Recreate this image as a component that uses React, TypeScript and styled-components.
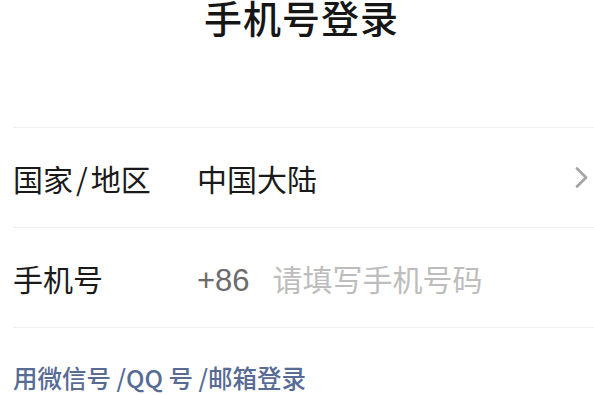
import React from "react";
import styled, { createGlobalStyle } from "styled-components";

const Global = createGlobalStyle`
  html, body { margin: 0; padding: 0; background: #ffffff; }
  body { font-family: "Noto Sans CJK SC", "Noto Sans", sans-serif; -webkit-font-smoothing: antialiased; }
`;

const Page = styled.div`
  width: 594px;
  height: 395px;
  overflow: hidden;
  background: #ffffff;
  display: flex;
  flex-direction: column;
`;

const Title = styled.h1`
  flex-shrink: 0;
  margin: 0;
  padding: 0 0 0 9px;
  height: 127px;
  font-size: 38px;
  line-height: 34px;
  font-weight: 500;
  color: #161616;
  text-align: center;
  letter-spacing: 1px;
`;

const Form = styled.div`
  flex-shrink: 0;
  display: flex;
  flex-direction: column;
  margin-left: 13px;
  border-top: 1px solid #f0f0f0;
`;

const Row = styled.div`
  display: flex;
  align-items: center;
  height: 99px;
  border-bottom: 1px solid #f0f0f0;
`;

const Label = styled.div`
  width: 184px;
  flex-shrink: 0;
  font-size: 30px;
  color: #1a1a1a;
`;

const Slash = styled.span`
  margin: 0 3px;
`;

const Value = styled.div`
  flex: 1;
  font-size: 30px;
  color: #1a1a1a;
`;

const Prefix = styled.span`
  font-family: "Liberation Sans", Arial, sans-serif;
  font-size: 31px;
  color: #6b6b6b;
  margin-right: 23px;
`;

const Placeholder = styled.span`
  font-size: 30px;
  color: #bdbdbd;
`;

const Chevron = styled.svg`
  width: 16px;
  height: 24px;
  margin-right: 4px;
  flex-shrink: 0;
`;

const Link = styled.a`
  flex-shrink: 0;
  display: block;
  margin: 32px 0 0 13px;
  font-size: 24.5px;
  font-weight: 500;
  color: #576b95;
  text-decoration: none;
  white-space: nowrap;
`;

export default function App() {
  return (
    <>
      <Global />
      <Page>
        <Title>手机号登录</Title>
        <Form>
          <Row>
            <Label>
              国家<Slash>/</Slash>地区
            </Label>
            <Value>中国大陆</Value>
            <Chevron viewBox="0 0 16 24">
              <polyline points="3,2.5 12,11.5 3,20.5" fill="none" stroke="#a5a5a5" strokeWidth="2.8" strokeLinecap="round" strokeLinejoin="round" />
            </Chevron>
          </Row>
          <Row>
            <Label>手机号</Label>
            <Value>
              <Prefix>+86</Prefix>
              <Placeholder>请填写手机号码</Placeholder>
            </Value>
          </Row>
        </Form>
        <Link>用微信号 /QQ 号 /邮箱登录</Link>
      </Page>
    </>
  );
}
